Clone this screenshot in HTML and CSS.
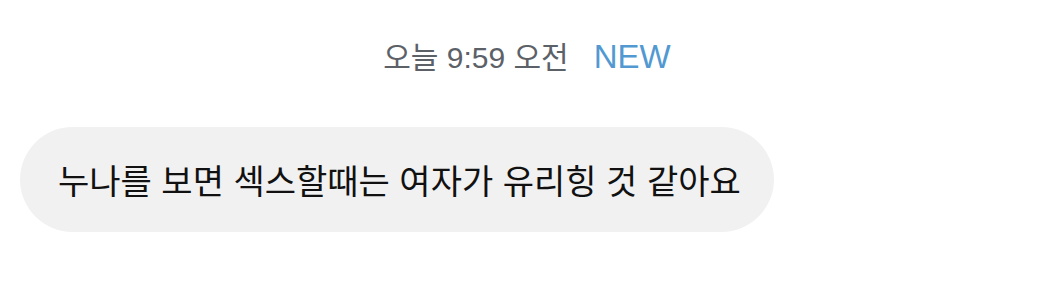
FILE: index.html
```html
<!DOCTYPE html>
<html lang="ko">
<head>
    <meta charset="UTF-8">
    <meta name="viewport" content="width=device-width, initial-scale=1.0">
    <title>Chat</title>
    <link rel="stylesheet" href="styles.css">
</head>
<body>

    <div class="chat">
        <div class="timestamp">
            <span class="time">오늘 9:59 오전</span>
            <span class="new-tag">NEW</span>
        </div>

        <div class="message-row">
            <div class="bubble">누나를 보면 섹스할때는 여자가 유리힝 것 같아요</div>
        </div>
    </div>

</body>
</html>
```

FILE: styles.css
```css
body {
    margin: 0;
    padding: 0;
    background: #ffffff;
    font-family: "Liberation Sans", "Noto Sans CJK KR", sans-serif;
}

.chat {
    display: flex;
    flex-direction: column;
    padding-top: 36px;
}

.timestamp {
    display: flex;
    justify-content: center;
    align-items: baseline;
    gap: 25px;
    line-height: 42px;
}

.time {
    color: #5c6168;
    font-size: 30px;
}

.new-tag {
    color: #5299d2;
    font-size: 33px;
}

.message-row {
    display: flex;
    padding: 0 20px;
    margin-top: 48px;
}

.bubble {
    background: #f1f1f2;
    color: #111111;
    font-family: "Noto Sans CJK KR", sans-serif;
    font-size: 34px;
    line-height: 105px;
    height: 105px;
    padding: 0 33px 0 38px;
    border-radius: 53px;
    white-space: nowrap;
}
```
